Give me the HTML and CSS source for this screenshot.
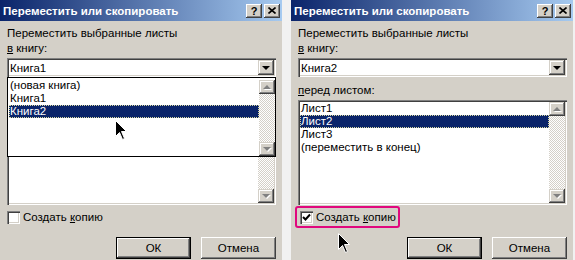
FILE: index.html
```html
<!DOCTYPE html>
<html lang="ru">
<head>
  <meta charset="UTF-8" />
  <title>Переместить или скопировать</title>
  <link rel="stylesheet" href="styles.css">
</head>
<body>
  <div class="screens">

    <!-- dialog 1: combo opened -->
    <div class="dialog">
      <div class="titlebar">
        <span class="title-text">Переместить или скопировать</span>
        <span class="cap-btn help">?</span>
        <span class="cap-btn close">
          <svg width="8" height="7" viewBox="0 0 8 7"><path d="M0.5 0.5 L7.5 6.5 M7.5 0.5 L0.5 6.5" stroke="#000" stroke-width="1.6"/></svg>
        </span>
      </div>
      <div class="content">
        <div class="label first">Переместить выбранные листы</div>
        <div class="label"><u>в</u> книгу:</div>
        <div class="combo">
          <span class="combo-text">Книга1</span>
          <span class="drop-btn"><span class="tri-down"></span></span>
        </div>
        <!-- label and rows under the open list are not visible -->
        <div class="label second covered"><u>п</u>еред листом:</div>
        <div class="listbox">
          <ul class="items"></ul>
          <div class="scrollbar">
            <span class="sb-btn"><span class="tri-up dis"></span></span>
            <span class="sb-track"></span>
            <span class="sb-btn"><span class="tri-down dis"></span></span>
          </div>
        </div>
        <div class="check-row">
          <label class="check">
            <span class="box"></span>
            <span>Создать <u>к</u>опию</span>
          </label>
        </div>
        <div class="buttons">
          <span class="btn default">ОК</span>
          <span class="btn">Отмена</span>
        </div>

        <div class="droplist">
          <ul class="items">
            <li>(новая книга)</li>
            <li>Книга1</li>
            <li class="sel">Книга2</li>
          </ul>
          <div class="scrollbar">
            <span class="sb-btn"><span class="tri-up dis"></span></span>
            <span class="sb-track"></span>
            <span class="sb-btn"><span class="tri-down dis"></span></span>
          </div>
        </div>
        <svg class="cursor cursor-one" width="13" height="20" viewBox="0 0 13 20"><path d="M0.5 0.5 L0.5 16.5 L4.5 12.5 L7.5 19.5 L9.5 18.5 L6.5 11.5 L11.5 11.5 Z" fill="#000" stroke="#fff" stroke-width="1"/></svg>
      </div>
    </div>

    <!-- dialog 2: target chosen -->
    <div class="dialog second-dialog">
      <div class="titlebar">
        <span class="title-text">Переместить или скопировать</span>
        <span class="cap-btn help">?</span>
        <span class="cap-btn close">
          <svg width="8" height="7" viewBox="0 0 8 7"><path d="M0.5 0.5 L7.5 6.5 M7.5 0.5 L0.5 6.5" stroke="#000" stroke-width="1.6"/></svg>
        </span>
      </div>
      <div class="content">
        <div class="label first">Переместить выбранные листы</div>
        <div class="label"><u>в</u> книгу:</div>
        <div class="combo">
          <span class="combo-text">Книга2</span>
          <span class="drop-btn"><span class="tri-down"></span></span>
        </div>
        <div class="label second"><u>п</u>еред листом:</div>
        <div class="listbox">
          <ul class="items">
            <li>Лист1</li>
            <li class="sel">Лист2</li>
            <li>Лист3</li>
            <li>(переместить в конец)</li>
          </ul>
          <div class="scrollbar">
            <span class="sb-btn"><span class="tri-up dis"></span></span>
            <span class="sb-track"></span>
            <span class="sb-btn"><span class="tri-down dis"></span></span>
          </div>
        </div>
        <div class="check-row">
          <label class="check marked">
            <span class="box">
              <svg width="9" height="9" viewBox="0 0 9 9"><path d="M1 4 L3.5 6.5 L8 1.5" fill="none" stroke="#000" stroke-width="2"/></svg>
            </span>
            <span>Создать <u>к</u>опию</span>
          </label>
        </div>
        <div class="buttons">
          <span class="btn default">ОК</span>
          <span class="btn">Отмена</span>
        </div>
        <svg class="cursor cursor-two" width="13" height="20" viewBox="0 0 13 20"><path d="M0.5 0.5 L0.5 16.5 L4.5 12.5 L7.5 19.5 L9.5 18.5 L6.5 11.5 L11.5 11.5 Z" fill="#000" stroke="#fff" stroke-width="1"/></svg>
      </div>
    </div>

  </div>
</body>
</html>
```

FILE: styles.css
```css
* {
  box-sizing: border-box;
}
body, html {
  margin: 0;
  padding: 0;
  width: 575px;
  height: 260px;
  overflow: hidden;
  background: #f1f1f1;
  font-family: "Liberation Sans", Arial, sans-serif;
  font-size: 11.5px;
  color: #000;
}
.screens {
  display: flex;
  height: 260px;
}
.dialog {
  width: 282px;
  height: 260px;
  background: #d4d0c8;
  display: flex;
  flex-direction: column;
}
.second-dialog {
  margin-left: 9px;
}
.titlebar {
  height: 21px;
  flex: 0 0 21px;
  display: flex;
  align-items: center;
  gap: 2px;
  padding: 0 2px 0 3px;
  background: linear-gradient(to right, #0a246a, #a6caf0);
  color: #fff;
  font-weight: bold;
}
.title-text {
  flex: 1;
  white-space: nowrap;
}
.cap-btn {
  width: 16px;
  height: 14px;
  display: flex;
  align-items: center;
  justify-content: center;
  background: #d4d0c8;
  color: #000;
  font-size: 11px;
  box-shadow: inset -1px -1px #404040, inset 1px 1px #fff, inset -2px -2px #808080;
}
.content {
  position: relative;
  padding: 5px 6px 0 7px;
  flex: 1;
}
.label {
  height: 14px;
  line-height: 14px;
  white-space: nowrap;
  margin-top: 1px;
}
.label.first {
  margin-top: 0;
}
.label.second {
  margin-top: 6px;
}
.label.covered {
  visibility: hidden;
}
u {
  text-decoration: underline;
  text-underline-offset: 1px;
}
.combo {
  margin-top: 3px;
  height: 19px;
  background: #fff;
  display: flex;
  align-items: center;
  padding: 2px 2px 2px 3px;
  box-shadow: inset 1px 1px #808080, inset 2px 2px #404040, inset -1px -1px #fff, inset -2px -2px #d4d0c8;
}
.combo-text {
  flex: 1;
}
.drop-btn, .sb-btn {
  width: 16px;
  height: 15px;
  flex: 0 0 auto;
  display: flex;
  align-items: center;
  justify-content: center;
  background: #d4d0c8;
  box-shadow: inset -1px -1px #404040, inset 1px 1px #d4d0c8, inset -2px -2px #808080, inset 2px 2px #fff;
}
.tri-down, .tri-up {
  width: 0;
  height: 0;
  border-left: 4px solid transparent;
  border-right: 4px solid transparent;
}
.tri-down {
  border-top: 4px solid #000;
}
.tri-up {
  border-bottom: 4px solid #000;
}
.tri-down.dis {
  border-top-color: #808080;
  filter: drop-shadow(1px 1px 0 #fff);
}
.tri-up.dis {
  border-bottom-color: #808080;
  filter: drop-shadow(1px 1px 0 #fff);
}
.listbox {
  margin-top: 3px;
  height: 105px;
  background: #fff;
  display: flex;
  padding: 2px;
  box-shadow: inset 1px 1px #808080, inset 2px 2px #404040, inset -1px -1px #fff, inset -2px -2px #d4d0c8;
}
.items {
  list-style: none;
  margin: 0;
  padding: 0;
  flex: 1;
}
.items li {
  height: 13px;
  line-height: 13px;
  padding-left: 1px;
  white-space: nowrap;
}
.items li.sel {
  background: #0a246a;
  color: #fff;
  outline: 1px dotted #d8d8a0;
  outline-offset: -1px;
}
.scrollbar {
  width: 16px;
  display: flex;
  flex-direction: column;
}
.sb-btn {
  height: 14px;
}
.sb-track {
  flex: 1;
  background: repeating-conic-gradient(#d4d0c8 0 25%, #fff 0 50%) 0 0 / 2px 2px;
}
.check-row {
  margin-top: 5px;
  height: 14px;
  display: flex;
}
.check {
  position: relative;
  display: flex;
  align-items: center;
  gap: 3px;
  white-space: nowrap;
}
.box {
  width: 13px;
  height: 13px;
  background: #fff;
  display: flex;
  align-items: center;
  justify-content: center;
  box-shadow: inset 1px 1px #808080, inset 2px 2px #404040, inset -1px -1px #fff, inset -2px -2px #d4d0c8;
}
.check.marked {
  margin-left: 2px;
}
.check.marked::after {
  content: "";
  position: absolute;
  left: -5px;
  top: -4px;
  right: -4px;
  bottom: -4px;
  border: 2px solid #e0087e;
  border-radius: 3px;
}
.buttons {
  margin-top: 13px;
  display: flex;
  justify-content: flex-end;
  gap: 10px;
}
.btn {
  width: 75px;
  height: 22px;
  display: flex;
  align-items: center;
  justify-content: center;
  background: #d4d0c8;
  box-shadow: inset -1px -1px #404040, inset 1px 1px #fff, inset -2px -2px #808080;
}
.btn.default {
  box-shadow: inset 0 0 0 1px #000, inset -2px -2px #404040, inset 2px 2px #fff, inset -3px -3px #808080;
}
.droplist {
  position: absolute;
  left: 7px;
  right: 6px;
  top: 56px;
  height: 80px;
  background: #fff;
  border: 1px solid #000;
  display: flex;
  padding: 1px 0 0 1px;
}
.droplist .scrollbar {
  margin-top: 1px;
}
.cursor {
  position: absolute;
}
.cursor-one {
  left: 115px;
  top: 99px;
}
.cursor-two {
  left: 47px;
  top: 212px;
}
```
